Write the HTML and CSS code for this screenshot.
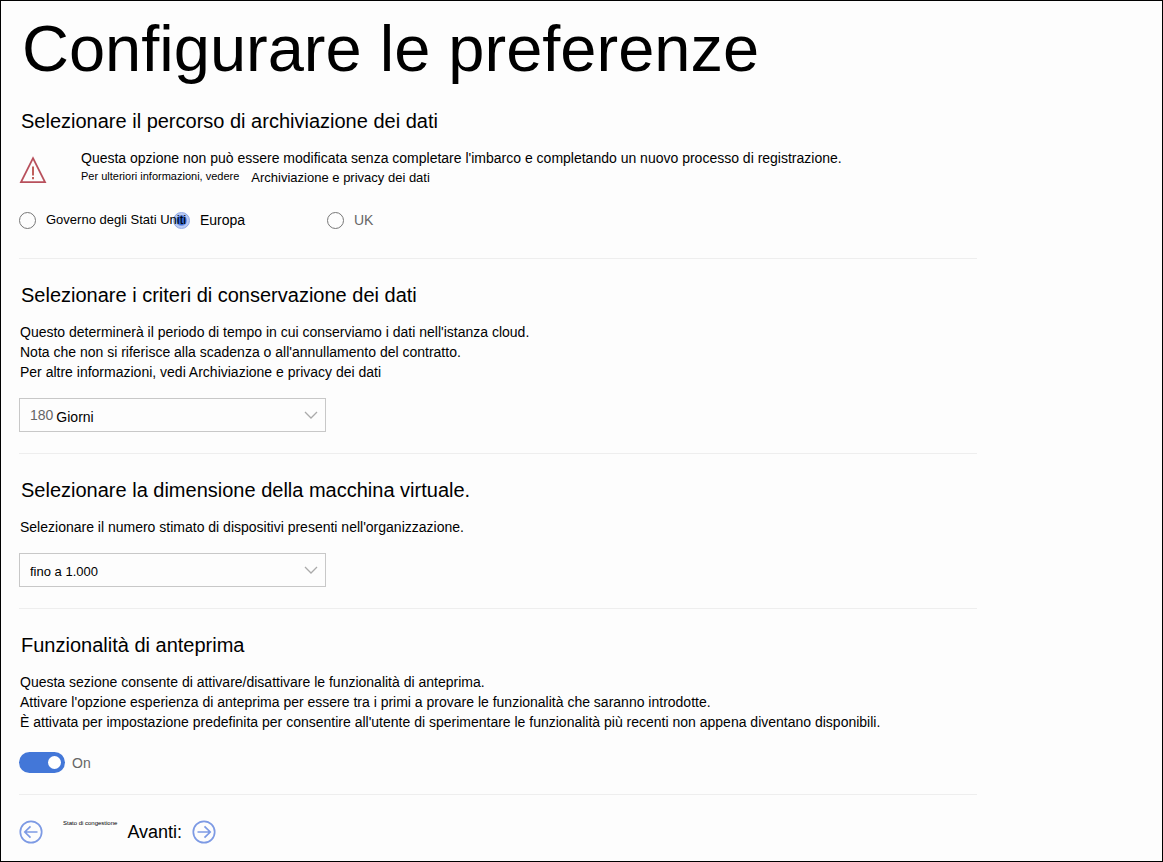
FILE: index.html
```html
<!DOCTYPE html>
<html lang="it">
<head>
<meta charset="utf-8">
<meta name="viewport" content="width=device-width, initial-scale=1">
<title>Configurare le preferenze</title>
<link rel="stylesheet" href="styles.css">
</head>
<body>
<main class="page">
  <h1 class="title">Configurare le preferenze</h1>

  <section class="section">
    <h2 class="heading" id="storage">Selezionare il percorso di archiviazione dei dati</h2>
    <div class="notice">
      <svg class="warning" viewBox="0 0 28 28" aria-hidden="true">
        <path d="M14 2.2 L26 26.2 H2 Z" fill="none" stroke="#b8505c" stroke-width="1.8"/>
        <path d="M14 10.5 V19.5 M14 21 V23.2" fill="none" stroke="#c0605c" stroke-width="2"/>
      </svg>
      <div class="notice-text">
        <p>Questa opzione non può essere modificata senza completare l'imbarco e completando un nuovo processo di registrazione.</p>
        <p class="notice-more"><span class="small">Per ulteriori informazioni, vedere</span><a href="#privacy">Archiviazione e privacy dei dati</a></p>
      </div>
    </div>
    <div class="options" role="radiogroup" aria-labelledby="storage">
      <label class="option compact"><input class="radio" type="radio" name="region"><span class="option-text">Governo degli Stati Uniti</span></label>
      <label class="option"><input class="radio" type="radio" name="region" checked><span class="option-text">Europa</span></label>
      <label class="option"><input class="radio" type="radio" name="region"><span class="option-text muted">UK</span></label>
    </div>
  </section>

  <section class="section">
    <h2 class="heading" id="retention">Selezionare i criteri di conservazione dei dati</h2>
    <p>Questo determinerà il periodo di tempo in cui conserviamo i dati nell'istanza cloud.</p>
    <p>Nota che non si riferisce alla scadenza o all'annullamento del contratto.</p>
    <p>Per altre informazioni, vedi Archiviazione e privacy dei dati</p>
    <div class="field">
      <span class="muted">180</span>
      <select class="select" aria-labelledby="retention"><option>Giorni</option></select>
      <svg class="chevron" viewBox="0 0 14 8" aria-hidden="true"><path d="M1 1 L7 7 L13 1"/></svg>
    </div>
  </section>

  <section class="section">
    <h2 class="heading" id="size">Selezionare la dimensione della macchina virtuale.</h2>
    <p>Selezionare il numero stimato di dispositivi presenti nell'organizzazione.</p>
    <div class="field compact">
      <select class="select" aria-labelledby="size"><option>fino a 1.000</option></select>
      <svg class="chevron" viewBox="0 0 14 8" aria-hidden="true"><path d="M1 1 L7 7 L13 1"/></svg>
    </div>
  </section>

  <section class="section">
    <h2 class="heading">Funzionalità di anteprima</h2>
    <p>Questa sezione consente di attivare/disattivare le funzionalità di anteprima.</p>
    <p>Attivare l'opzione esperienza di anteprima per essere tra i primi a provare le funzionalità che saranno introdotte.</p>
    <p>È attivata per impostazione predefinita per consentire all'utente di sperimentare le funzionalità più recenti non appena diventano disponibili.</p>
    <label class="toggle"><input class="switch" type="checkbox" role="switch" checked><span class="muted">On</span></label>
  </section>

  <nav class="pager">
    <button class="pager-button" type="button">
      <svg class="arrow" viewBox="0 0 24 24" aria-hidden="true"><circle cx="12" cy="12" r="10.7"/><path d="M18.5 12 H6 M11.5 6.3 L5.8 12 L11.5 17.7"/></svg>
      <span class="tiny">Stato di congestione</span>
    </button>
    <button class="pager-button pager-next" type="button">
      <span>Avanti:</span>
      <svg class="arrow" viewBox="0 0 24 24" aria-hidden="true"><circle cx="12" cy="12" r="10.7"/><path d="M5.5 12 H18 M12.5 6.3 L18.2 12 L12.5 17.7"/></svg>
    </button>
  </nav>
</main>
</body>
</html>
```
FILE: styles.css
```css
* {
  box-sizing: border-box;
}

body {
  margin: 0;
  min-height: 100vh;
  border: 1px solid #000;
  background: #fdfdfd;
  color: #000;
  font: 14px/20px "Liberation Sans", Arial, sans-serif;
}

h1, h2, p {
  margin: 0;
  font-weight: 400;
}

a {
  color: inherit;
  text-decoration: none;
}

.page {
  max-width: 994px;
  padding: 11px 18px 0;
}

.title {
  padding-left: 3px;
  font-size: 65px;
  line-height: 73px;
}

.section {
  padding: 24px 0 21px;
  border-bottom: 1px solid #eee;
}

.title + .section {
  padding-bottom: 28px;
}

.heading {
  margin-bottom: 15px;
  padding-left: 2px;
  font-size: 20px;
  line-height: 24px;
}

.section > p {
  padding-left: 1px;
}

.notice {
  display: flex;
  gap: 34px;
}

.warning {
  flex: none;
  width: 28px;
  height: 28px;
  margin-top: 8px;
}

.notice-more {
  display: flex;
  gap: 12px;
  font-size: 13px;
}

.small {
  font-size: 11px;
  line-height: 16px;
}

.options {
  display: grid;
  grid-template-columns: repeat(3, 154px);
  margin-top: 22px;
}

.option {
  display: flex;
  align-items: center;
  gap: 10px;
  white-space: nowrap;
}

.option-text {
  position: relative;
  z-index: 1;
}

.compact {
  font-size: 13px;
}

.radio {
  appearance: none;
  flex: none;
  width: 17px;
  height: 17px;
  margin: 0;
  border: 1px solid #777;
  border-radius: 50%;
}

.radio:checked {
  border-color: #8fa8e6;
  background: radial-gradient(circle, #3467d6 4px, #b9c9f2 6px);
}

.muted {
  color: #666;
  font-size: 14px;
}

.field {
  display: flex;
  align-items: center;
  gap: 3px;
  width: 307px;
  height: 34px;
  margin-top: 16px;
  padding: 0 7px 0 10px;
  border: 1px solid #c8c8c8;
}

.select {
  appearance: none;
  flex: 1;
  height: 100%;
  padding: 4px 0 0;
  border: 0;
  background: none;
  color: inherit;
  font: inherit;
}

.chevron {
  width: 14px;
  height: 8px;
  fill: none;
  stroke: #aaa;
  stroke-width: 1.3;
}

.toggle {
  display: flex;
  align-items: center;
  gap: 7px;
  width: max-content;
  margin-top: 20px;
}

.switch {
  appearance: none;
  display: flex;
  align-items: center;
  justify-content: flex-end;
  width: 46px;
  height: 21px;
  margin: 0;
  padding: 0 4px;
  border-radius: 11px;
  background: #4377d8;
}

.switch::before {
  content: "";
  width: 13px;
  height: 13px;
  border-radius: 50%;
  background: #fff;
}

.switch:not(:checked) {
  justify-content: flex-start;
}

.pager {
  display: flex;
  gap: 10px;
  padding: 25px 0 16px;
}

.pager-button {
  display: flex;
  align-items: center;
  gap: 20px;
  padding: 0;
  border: 0;
  background: none;
  color: inherit;
  font: inherit;
}

.pager-next {
  gap: 10px;
  font-size: 18px;
}

.tiny {
  align-self: flex-start;
  font-size: 6px;
  line-height: 6px;
}

.arrow {
  width: 24px;
  height: 24px;
  fill: none;
  stroke: #7d9ae4;
  stroke-width: 1.7;
}
```
